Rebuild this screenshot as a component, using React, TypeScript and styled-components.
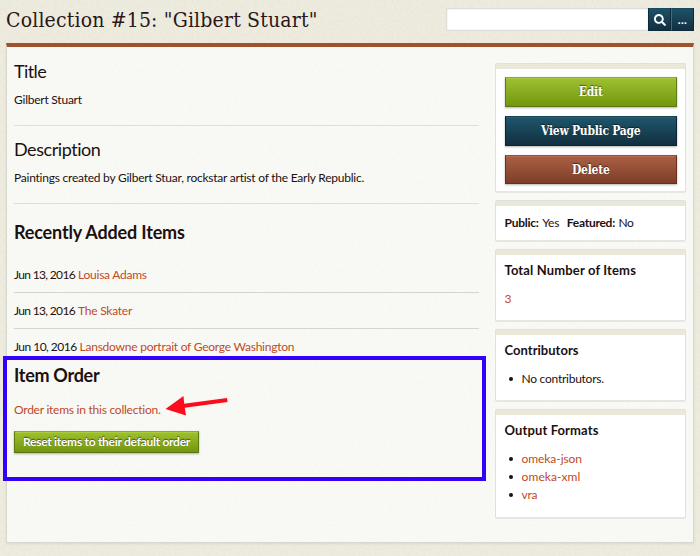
import React from 'react';
import styled, { createGlobalStyle, css } from 'styled-components';
import { FaSearch } from 'react-icons/fa';

const grain = (alpha: number) =>
  `url("data:image/svg+xml,${encodeURIComponent(
    `<svg xmlns='http://www.w3.org/2000/svg' width='200' height='200'><filter id='n' x='0' y='0' width='100%' height='100%'><feTurbulence type='fractalNoise' baseFrequency='0.35' numOctaves='3' stitchTiles='stitch'/><feColorMatrix values='0 0 0 0 0.45  0 0 0 0 0.42  0 0 0 0 0.3  ${alpha} 0 0 0 0'/></filter><rect width='200' height='200' filter='url(#n)'/></svg>`
  )}")`;

const sans = `Lato, "Liberation Sans", sans-serif`;
const slab = `"DejaVu Serif Condensed", "DejaVu Serif", serif`;

const Global = createGlobalStyle`
  * { box-sizing: border-box; }
  body { margin: 0; background: #f0eee2; }
`;

const Page = styled.div`
  height: 556px;
  padding: 0 6px;
  overflow: hidden;
  font: 12px/18px ${sans};
  letter-spacing: -0.25px;
  color: #1c1010;
  background: #f0eee2 ${grain(0.12)};
`;

const Header = styled.header`
  display: flex;
  justify-content: space-between;
  align-items: flex-start;
  height: 43px;
`;

const PageTitle = styled.h1`
  margin: 5px 0 0;
  font: 400 21px/31px ${slab};
  letter-spacing: 0.17px;
  white-space: nowrap;
  color: #2a1717;
`;

const Search = styled.form`
  display: flex;
  margin-top: 8px;
  height: 23px;
`;

const SearchInput = styled.input`
  width: 202px;
  margin: 0;
  border: 1px solid #dddcd6;
  border-right: 0;
  background: #fff;
  outline: 0;
  box-shadow: inset 0 0 2px #dcdfe0;
`;

const SearchButton = styled.button`
  display: flex;
  align-items: center;
  justify-content: center;
  width: 23px;
  padding: 0;
  border: 1px solid #0c2a3a;
  border-top-color: #174a60;
  background: linear-gradient(#1d5168, #122f40);
  color: #fff;
  font: 700 12px/20px ${sans};
  letter-spacing: 0.3px;
  & + & {
    border-left-color: #486b7b;
  }
`;

const Panel = styled.main`
  position: relative;
  display: flex;
  justify-content: space-between;
  height: 500px;
  padding: 1px 8px 0;
  border: 1px solid #d9d8cf;
  border-top: 4px solid #a0522f;
  background: #fafbf7 ${grain(0.055)};
  box-shadow: 0 1px 2px rgba(120, 115, 90, 0.15);
`;

const Content = styled.div`
  width: 465px;
  margin-left: -1px;
`;

const Section = styled.section`
  padding: 12px 0 16px;
  border-bottom: 1px solid #dddfdb;
`;

const Heading = styled.h2<{ $bold?: boolean; $tight: number }>`
  margin: 0;
  font-size: 18px;
  line-height: 22px;
  font-weight: ${p => (p.$bold ? 700 : 400)};
  letter-spacing: ${p => p.$tight}px;
`;

const Text = styled.p`
  margin: 9px 0 0;
  letter-spacing: -0.235px;
`;

const Recent = styled.section`
  padding-top: 17px;
`;

const ItemList = styled.ul`
  list-style: none;
  margin: 14px 0 0;
  padding: 0;
`;

const Item = styled.li`
  padding: 9px 0 8px;
  border-bottom: 1px solid #d3d5d1;
  &:last-child {
    border: 0;
  }
`;

const ItemDate = styled.span<{ $tight: number }>`
  display: inline-block;
  margin-right: 3px;
  letter-spacing: ${p => p.$tight}px;
`;

const Link = styled.a<{ $spacing?: number }>`
  color: #bf4a26;
  text-decoration: none;
  letter-spacing: ${p => p.$spacing ?? -0.24}px;
`;

const OrderText = styled.p`
  margin: 15px 0 12px;
`;

const palette = {
  green: css`
    border-color: #8aa83a #5d7c12 #587611;
    background: linear-gradient(#9fc031, #73960f);
    box-shadow: inset 0 1px #a9cc3b, 0 1px 2px rgba(0, 0, 0, 0.3);
  `,
  blue: css`
    border-color: #1c4353 #0b2433 #0b2433;
    background: linear-gradient(#1f566c, #122f3f);
    box-shadow: inset 0 1px #246078, 0 1px 2px rgba(0, 0, 0, 0.3);
  `,
  red: css`
    border-color: #91543c #6d2f1b #672d1a;
    background: linear-gradient(#ab6044, #7c3e28);
    box-shadow: inset 0 1px #b56b4f, 0 1px 2px rgba(0, 0, 0, 0.3);
  `,
};

const Button = styled.button<{ $tone: keyof typeof palette }>`
  display: block;
  padding: 0;
  border: 1px solid;
  color: #fff;
  text-align: center;
  white-space: nowrap;
  text-shadow: 0 -1px 1px rgba(0, 0, 0, 0.55);
  ${p => palette[p.$tone]}
`;

const ResetButton = styled(Button)`
  width: 185px;
  height: 22px;
  font: 700 12px/20px ${sans};
  letter-spacing: -0.28px;
`;

const ActionButton = styled(Button)<{ $height?: number }>`
  width: 100%;
  height: ${p => p.$height ?? 30}px;
  font: 700 12px/28px ${slab};
  letter-spacing: -0.25px;
`;

const Sidebar = styled.aside`
  display: flex;
  flex-direction: column;
  gap: 7px;
  width: 191px;
  padding-top: 15px;
  margin-right: -1px;
`;

const Card = styled.section<{ $height: number }>`
  height: ${p => p.$height}px;
  padding: 6px 8px 0 8.5px;
  border: 1px solid #e0e1dd;
  border-bottom-width: 2px;
  border-bottom-color: #e6e7e4;
  border-radius: 2px;
  background: linear-gradient(#eae8d9 5px, #fff 5px);
`;

const Actions = styled(Card)`
  display: flex;
  flex-direction: column;
  gap: 9px;
  padding-top: 13px;
`;

const Status = styled(Card)`
  display: flex;
  padding-top: 13px;
`;

const Value = styled.span<{ $gap?: number; $spacing: number }>`
  margin: 0 ${p => p.$gap ?? 0}px 0 3.5px;
  letter-spacing: ${p => p.$spacing}px;
`;

const CardTitle = styled.h4<{ $spacing: number }>`
  margin: 5px 0 11px;
  font-size: 13px;
  line-height: 18px;
  font-weight: 700;
  letter-spacing: ${p => p.$spacing}px;
`;

const Bullets = styled.ul`
  list-style: none;
  margin: 0;
  padding: 0 0 0 4px;
`;

const Bullet = styled.li`
  display: flex;
  align-items: center;
  gap: 9px;
  &::before {
    content: '';
    width: 4px;
    height: 4px;
    border-radius: 50%;
    background: #1c1010;
  }
`;

const Highlight = styled.div`
  position: absolute;
  left: -4px;
  top: 309px;
  width: 483px;
  height: 125px;
  border: 4px solid #3300fb;
  pointer-events: none;
`;

const Arrow = styled.svg`
  position: absolute;
  left: 153px;
  top: 343px;
`;

const items = [
  { date: 'Jun 13, 2016', tight: -0.66, title: 'Louisa Adams' },
  { date: 'Jun 13, 2016', tight: -0.66, title: 'The Skater' },
  { date: 'Jun 10, 2016', tight: -0.53, title: 'Lansdowne portrait of George Washington' },
];

const formats = [
  { name: 'omeka-json', spacing: -0.06 },
  { name: 'omeka-xml', spacing: 0.11 },
  { name: 'vra', spacing: -0.2 },
];

export default function App() {
  return (
    <Page>
      <Global />
      <Header>
        <PageTitle>Collection #15: "Gilbert Stuart"</PageTitle>
        <Search>
          <SearchInput type="text" aria-label="Search" />
          <SearchButton type="button" aria-label="Search">
            <FaSearch size={12} />
          </SearchButton>
          <SearchButton type="button">...</SearchButton>
        </Search>
      </Header>
      <Panel>
        <Content>
          <Section>
            <Heading $tight={-0.6}>Title</Heading>
            <Text>Gilbert Stuart</Text>
          </Section>
          <Section>
            <Heading $tight={-0.45}>Description</Heading>
            <Text>Paintings created by Gilbert Stuar, rockstar artist of the Early Republic.</Text>
          </Section>
          <Recent>
            <Heading $bold $tight={-0.16}>Recently Added Items</Heading>
            <ItemList>
              {items.map((item, i) => (
                <Item key={i}>
                  <ItemDate $tight={item.tight}>{item.date}</ItemDate>
                  <Link>{item.title}</Link>
                </Item>
              ))}
            </ItemList>
          </Recent>
          <Heading $bold $tight={-0.28}>Item Order</Heading>
          <OrderText>
            <Link>Order items in this collection.</Link>
          </OrderText>
          <ResetButton $tone="green">Reset items to their default order</ResetButton>
        </Content>
        <Sidebar>
          <Actions $height={130}>
            <ActionButton $tone="green">Edit</ActionButton>
            <ActionButton $tone="blue">View Public Page</ActionButton>
            <ActionButton $tone="red" $height={29}>Delete</ActionButton>
          </Actions>
          <Status $height={42}>
            <b>Public:</b>
            <Value $gap={7.5} $spacing={-0.2}>Yes</Value>
            <b>Featured:</b>
            <Value $spacing={-0.5}>No</Value>
          </Status>
          <Card $height={73}>
            <CardTitle $spacing={0.145}>Total Number of Items</CardTitle>
            <Link>3</Link>
          </Card>
          <Card $height={73}>
            <CardTitle $spacing={0.03}>Contributors</CardTitle>
            <Bullets>
              <Bullet>No contributors.</Bullet>
            </Bullets>
          </Card>
          <Card $height={110}>
            <CardTitle $spacing={0.12}>Output Formats</CardTitle>
            <Bullets>
              {formats.map(f => (
                <Bullet key={f.name}>
                  <Link $spacing={f.spacing}>{f.name}</Link>
                </Bullet>
              ))}
            </Bullets>
          </Card>
        </Sidebar>
        <Highlight />
        <Arrow width="72" height="30" viewBox="0 0 72 30">
          <path d="M5.5 19 23.5 6 24.2 13.8 67 8 67.6 12 24.8 17.8 26 25.5Z" fill="#fb0d1b" />
        </Arrow>
      </Panel>
    </Page>
  );
}
